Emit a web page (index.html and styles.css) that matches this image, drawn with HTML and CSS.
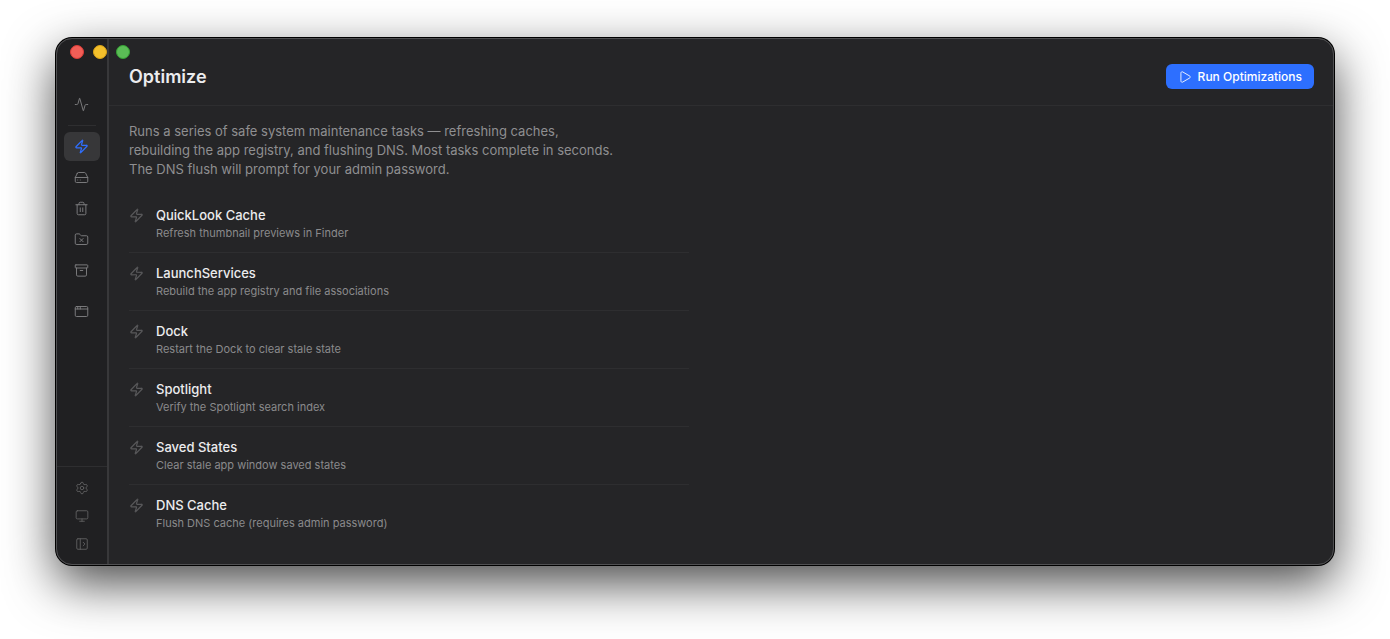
FILE: index.html
```html
<!DOCTYPE html>
<html lang="en">

<head>
    <meta charset="utf-8">
    <meta name="viewport" content="width=device-width, initial-scale=1.0">
    <title>Optimize</title>
    <link rel="stylesheet" href="styles.css">
</head>

<body>
    <!-- shared icons -->
    <svg class="sprite" aria-hidden="true">
        <symbol id="zap" viewBox="0 0 24 24">
            <path d="M4 14a1 1 0 0 1-.78-1.63l9.9-10.2a.5.5 0 0 1 .86.46l-1.92 6.02A1 1 0 0 0 13 10h7a1 1 0 0 1 .78 1.63l-9.9 10.2a.5.5 0 0 1-.86-.46l1.92-6.02A1 1 0 0 0 11 14z" />
        </symbol>
    </svg>

    <div class="window">
        <div class="lights">
            <button class="light red" aria-label="Close"></button>
            <button class="light yellow" aria-label="Minimize"></button>
            <button class="light green" aria-label="Zoom"></button>
        </div>

        <aside class="sidebar">
            <nav class="nav">
                <button class="item" aria-label="Status">
                    <svg class="icon" viewBox="0 0 24 24"><path d="M22 12h-2.48a2 2 0 0 0-1.93 1.46l-2.35 8.36a.25.25 0 0 1-.48 0L9.24 2.18a.25.25 0 0 0-.48 0l-2.35 8.36A2 2 0 0 1 4.49 12H2" /></svg>
                </button>
                <hr class="divider">
                <button class="item active" aria-label="Optimize" aria-current="page">
                    <svg class="icon zap"><use href="#zap" /></svg>
                </button>
                <button class="item" aria-label="Disk">
                    <svg class="icon" viewBox="0 0 24 24"><path d="M22 12H2M5.45 5.11 2 12v6a2 2 0 0 0 2 2h16a2 2 0 0 0 2-2v-6l-3.45-6.89A2 2 0 0 0 16.76 4H7.24a2 2 0 0 0-1.79 1.11zM6 16h.01M10 16h.01" /></svg>
                </button>
                <button class="item" aria-label="Clean">
                    <svg class="icon" viewBox="0 0 24 24"><path d="M3 6h18M19 6v14a2 2 0 0 1-2 2H7a2 2 0 0 1-2-2V6M8 6V4a2 2 0 0 1 2-2h4a2 2 0 0 1 2 2v2M10 11v6M14 11v6" /></svg>
                </button>
                <button class="item" aria-label="Purge">
                    <svg class="icon" viewBox="0 0 24 24"><path d="M20 20a2 2 0 0 0 2-2V8a2 2 0 0 0-2-2h-7.9a2 2 0 0 1-1.69-.9L9.6 3.9A2 2 0 0 0 7.93 3H4a2 2 0 0 0-2 2v13a2 2 0 0 0 2 2ZM9.5 10.5l5 5M14.5 10.5l-5 5" /></svg>
                </button>
                <button class="item" aria-label="Archives">
                    <svg class="icon" viewBox="0 0 24 24"><rect x="2" y="3" width="20" height="5" rx="1" /><path d="M4 8v11a2 2 0 0 0 2 2h12a2 2 0 0 0 2-2V8M10 12h4" /></svg>
                </button>
                <button class="item apps" aria-label="Apps">
                    <svg class="icon" viewBox="0 0 24 24"><rect x="2" y="4" width="20" height="16" rx="2" /><path d="M10 4v4M2 8h20M6 4v4" /></svg>
                </button>
            </nav>

            <div class="tools">
                <button class="tool" aria-label="Settings">
                    <svg class="icon small" viewBox="0 0 24 24"><path d="M9.671 4.136a2.34 2.34 0 0 1 4.659 0 2.34 2.34 0 0 0 3.319 1.915 2.34 2.34 0 0 1 2.33 4.033 2.34 2.34 0 0 0 0 3.831 2.34 2.34 0 0 1-2.33 4.033 2.34 2.34 0 0 0-3.319 1.915 2.34 2.34 0 0 1-4.659 0 2.34 2.34 0 0 0-3.32-1.915 2.34 2.34 0 0 1-2.33-4.033 2.34 2.34 0 0 0 0-3.831A2.34 2.34 0 0 1 6.35 6.051a2.34 2.34 0 0 0 3.319-1.915" /><circle cx="12" cy="12" r="3" /></svg>
                </button>
                <button class="tool" aria-label="Appearance">
                    <svg class="icon small" viewBox="0 0 24 24"><rect x="2" y="3" width="20" height="14" rx="2" /><path d="M8 21h8M12 17v4" /></svg>
                </button>
                <button class="tool" aria-label="Expand sidebar">
                    <svg class="icon small" viewBox="0 0 24 24"><rect x="3" y="3" width="18" height="18" rx="2" /><path d="M9 3v18M14 9l3 3-3 3" /></svg>
                </button>
            </div>
        </aside>

        <main class="main">
            <header class="header">
                <h1>Optimize</h1>
                <button class="run">
                    <svg class="icon small" viewBox="0 0 24 24"><path d="M5 5a2 2 0 0 1 3.008-1.728l11.997 6.998a2 2 0 0 1 .003 3.458l-12 7A2 2 0 0 1 5 19z" /></svg>
                    Run Optimizations
                </button>
            </header>

            <section class="content">
                <p class="intro">Runs a series of safe system maintenance tasks — refreshing caches,<br>
                    rebuilding the app registry, and flushing DNS. Most tasks complete in seconds.<br>
                    The DNS flush will prompt for your admin password.</p>

                <ul class="tasks">
                    <li class="task">
                        <svg class="icon zap"><use href="#zap" /></svg>
                        <div>
                            <h2>QuickLook Cache</h2>
                            <p>Refresh thumbnail previews in Finder</p>
                        </div>
                    </li>
                    <li class="task">
                        <svg class="icon zap"><use href="#zap" /></svg>
                        <div>
                            <h2>LaunchServices</h2>
                            <p>Rebuild the app registry and file associations</p>
                        </div>
                    </li>
                    <li class="task">
                        <svg class="icon zap"><use href="#zap" /></svg>
                        <div>
                            <h2>Dock</h2>
                            <p>Restart the Dock to clear stale state</p>
                        </div>
                    </li>
                    <li class="task">
                        <svg class="icon zap"><use href="#zap" /></svg>
                        <div>
                            <h2>Spotlight</h2>
                            <p>Verify the Spotlight search index</p>
                        </div>
                    </li>
                    <li class="task">
                        <svg class="icon zap"><use href="#zap" /></svg>
                        <div>
                            <h2>Saved States</h2>
                            <p>Clear stale app window saved states</p>
                        </div>
                    </li>
                    <li class="task">
                        <svg class="icon zap"><use href="#zap" /></svg>
                        <div>
                            <h2>DNS Cache</h2>
                            <p>Flush DNS cache (requires admin password)</p>
                        </div>
                    </li>
                </ul>
            </section>
        </main>
    </div>
</body>

</html>
```
FILE: styles.css
```css
* {
    box-sizing: border-box;
}

body {
    margin: 0;
    min-height: 100vh;
    padding: 38px 56px 74px 56px;
    display: flex;
    background-color: white;
    font-family: Inter, sans-serif;
    font-size: 13px;
    color: #ececee;
}

h1, h2, p, ul {
    margin: 0;
    padding: 0;
}

button {
    border: none;
    padding: 0;
    background: none;
    font-family: inherit;
    color: inherit;
}

.sprite {
    position: absolute;
    width: 0;
    height: 0;
}

.icon {
    width: 15px;
    height: 15px;
    flex-shrink: 0;
    fill: none;
    stroke: currentColor;
    stroke-width: 1.5;
    stroke-linecap: round;
    stroke-linejoin: round;
}

.icon.small {
    width: 14px;
    height: 14px;
}

.zap {
    stroke-width: 2;
}

/* window */
.window {
    position: relative;
    flex: 1;
    display: flex;
    border-radius: 16px;
    background-color: #252527;
    box-shadow: 0 0 0 1px #000, 0 18px 50px rgba(0, 0, 0, 0.72);
}

/* light line just inside the window edge */
.window::after {
    content: "";
    position: absolute;
    inset: 0;
    border: 1px solid #505052;
    border-radius: 16px;
    pointer-events: none;
}

.lights {
    position: absolute;
    top: 7px;
    left: 14px;
    display: flex;
    gap: 9px;
}

.light {
    width: 14px;
    height: 14px;
    border-radius: 50%;
}

.red {
    background-color: #f25e57;
    border: 1px solid #dc3c37;
}

.yellow {
    background-color: #f4c02c;
    border: 1px solid #dba417;
}

.green {
    background-color: #5bbd56;
    border: 1px solid #35a233;
}

/* sidebar */
.sidebar {
    width: 52px;
    flex-shrink: 0;
    display: flex;
    flex-direction: column;
    justify-content: space-between;
    border-right: 1px solid #38383a;
    border-radius: 16px 0 0 16px;
    background-color: #202022;
}

.nav, .tools {
    display: flex;
    flex-direction: column;
    align-items: center;
    gap: 2px;
}

.nav {
    padding-top: 52px;
}

.item {
    width: 36px;
    height: 29px;
    display: flex;
    align-items: center;
    justify-content: center;
    border-radius: 6px;
    color: #7f7f81;
}

.active {
    background-color: #373739;
    color: #2f6fff;
}

.divider {
    width: 28px;
    height: 1px;
    margin: 4px 0;
    border: none;
    background-color: #2e2e30;
}

.apps {
    margin-top: 10px;
}

.tools {
    padding: 8px 0;
    border-top: 1px solid #2e2e30;
}

.tool {
    width: 36px;
    height: 26px;
    display: flex;
    align-items: center;
    justify-content: center;
    color: #626264;
}

/* main */
.main {
    flex: 1;
    min-width: 0;
    border-left: 1px solid #38383a;
}

.header {
    display: flex;
    align-items: center;
    justify-content: space-between;
    padding: 26px 20px 16px 20px;
    border-bottom: 1px solid #2e2e30;
}

h1 {
    font-size: 18px;
    line-height: 25px;
    font-weight: 600;
}

.run {
    height: 25px;
    padding: 0 12px;
    display: flex;
    align-items: center;
    gap: 6px;
    border-radius: 6px;
    background-color: #2d6fff;
    color: white;
    font-size: 12px;
    font-weight: 500;
}

.content {
    padding: 16px 20px;
}

.intro {
    max-width: 520px;
    line-height: 19px;
    color: #8f8f91;
}

.tasks {
    max-width: 560px;
    margin-top: 16px;
    list-style: none;
}

.task {
    display: flex;
    gap: 12px;
    padding: 12px 0 11px 0;
    border-bottom: 1px solid #2e2e30;
}

.task:last-child {
    border-bottom: none;
}

.task .icon {
    margin-top: 1px;
    color: #58585a;
}

.task h2 {
    margin-bottom: 2px;
    font-size: 13px;
    line-height: 16px;
    font-weight: 500;
}

.task p {
    font-size: 11px;
    line-height: 16px;
    color: #8a8a8c;
}
```
